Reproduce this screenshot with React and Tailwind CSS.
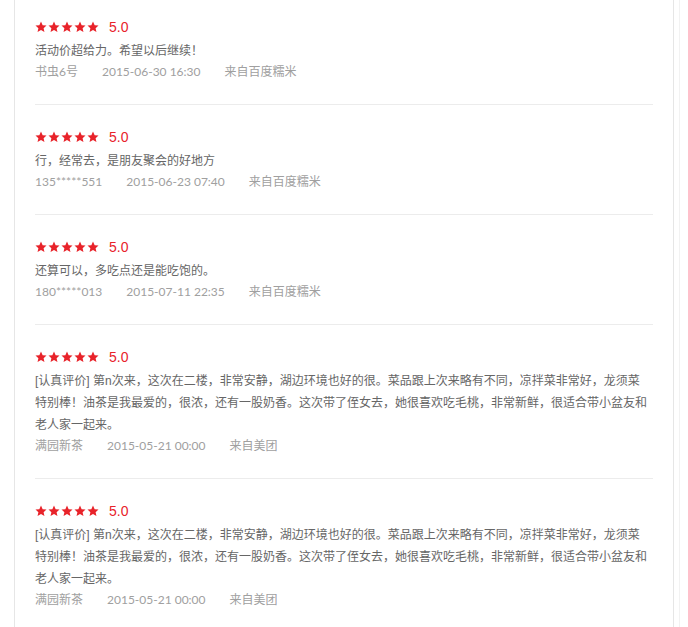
const reviews = [
  {
    score: "5.0",
    text: "活动价超给力。希望以后继续！",
    user: "书虫6号",
    time: "2015-06-30 16:30",
    from: "来自百度糯米",
  },
  {
    score: "5.0",
    text: "行，经常去，是朋友聚会的好地方",
    user: "135*****551",
    time: "2015-06-23 07:40",
    from: "来自百度糯米",
  },
  {
    score: "5.0",
    text: "还算可以，多吃点还是能吃饱的。",
    user: "180*****013",
    time: "2015-07-11 22:35",
    from: "来自百度糯米",
  },
  {
    score: "5.0",
    text: "[认真评价] 第n次来，这次在二楼，非常安静，湖边环境也好的很。菜品跟上次来略有不同，凉拌菜非常好，龙须菜特别棒！油茶是我最爱的，很浓，还有一股奶香。这次带了侄女去，她很喜欢吃毛桃，非常新鲜，很适合带小盆友和老人家一起来。",
    user: "满园新茶",
    time: "2015-05-21 00:00",
    from: "来自美团",
  },
  {
    score: "5.0",
    text: "[认真评价] 第n次来，这次在二楼，非常安静，湖边环境也好的很。菜品跟上次来略有不同，凉拌菜非常好，龙须菜特别棒！油茶是我最爱的，很浓，还有一股奶香。这次带了侄女去，她很喜欢吃毛桃，非常新鲜，很适合带小盆友和老人家一起来。",
    user: "满园新茶",
    time: "2015-05-21 00:00",
    from: "来自美团",
  },
];

function Star() {
  return (
    <svg width="12" height="12" viewBox="0 0 24 24" className="block">
      <path
        fill="#e8232a"
        d="M12 1.2l3.3 7.1 7.7.8-5.8 5.2 1.7 7.6L12 18l-6.9 3.9 1.7-7.6L1 9.1l7.7-.8z"
      />
    </svg>
  );
}

function ReviewItem({ review, first }) {
  return (
    <li className={`border-b border-[#ececec] pb-[22px] ${first ? "pt-[17px]" : "pt-[22px]"}`}>
      <div className="flex h-5 items-center">
        <div className="flex gap-px">
          <Star />
          <Star />
          <Star />
          <Star />
          <Star />
        </div>
        <span className="ml-[10px] text-[14px] leading-5 text-[#e8232a]">{review.score}</span>
      </div>
      <p className="mt-[3px] max-w-[613px] text-[12px] leading-[22px] text-[#666]">{review.text}</p>
      <p
        className="flex text-[12px] leading-5 text-[#a0a0a0]"
        style={{ fontFamily: 'Lato, "Noto Sans CJK SC", sans-serif' }}
      >
        <span className="mr-6">{review.user}</span>
        <span className="mr-6">{review.time}</span>
        <span>{review.from}</span>
      </p>
    </li>
  );
}

export default function App() {
  return (
    <div
      className="h-[627px] w-[688px] overflow-hidden bg-white"
      style={{ fontFamily: '"Liberation Sans", "Noto Sans CJK SC", sans-serif' }}
    >
      <div className="ml-[14px] h-full w-[666px] border-r border-[#f2f2f2]">
        <div className="h-full w-[660px] border-x border-[#e6e6e6] px-5">
          <ul>
            {reviews.map((review, index) => (
              <ReviewItem key={index} review={review} first={index === 0} />
            ))}
          </ul>
        </div>
      </div>
    </div>
  );
}
